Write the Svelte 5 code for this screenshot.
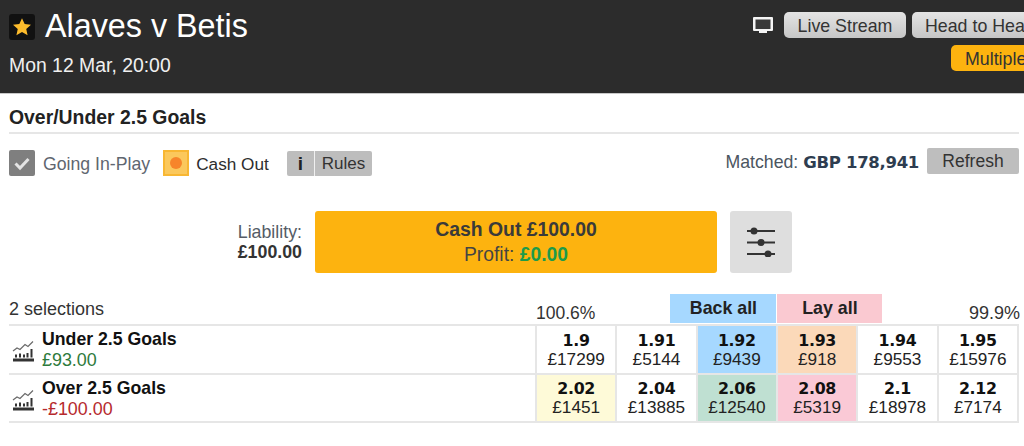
<script>
  const toolbar = { matched: "GBP 178,941" };

  const runners = [
    {
      name: "Under 2.5 Goals",
      pl: "£93.00",
      tone: "win",
      prices: [
        { odds: "1.9", size: "£17299" },
        { odds: "1.91", size: "£5144" },
        { odds: "1.92", size: "£9439", fill: "back" },
        { odds: "1.93", size: "£918", fill: "peach" },
        { odds: "1.94", size: "£9553" },
        { odds: "1.95", size: "£15976" }
      ]
    },
    {
      name: "Over 2.5 Goals",
      pl: "-£100.00",
      tone: "loss",
      prices: [
        { odds: "2.02", size: "£1451", fill: "cream" },
        { odds: "2.04", size: "£13885" },
        { odds: "2.06", size: "£12540", fill: "green" },
        { odds: "2.08", size: "£5319", fill: "lay" },
        { odds: "2.1", size: "£18978" },
        { odds: "2.12", size: "£7174" }
      ]
    }
  ];
</script>

<div class="page">
  <header class="top">
    <div class="event">
      <div class="title-row">
        <span class="star-box">
          <svg viewBox="0 0 24 24" width="20" height="20">
            <path fill="#fdbc2c" d="M12 1.500l3.200 7 7.600.8-5.700 5.100 1.600 7.500L12 18.100l-6.700 3.800 1.600-7.500L1.200 9.300l7.600-.8z" />
          </svg>
        </span>
        <h1>Alaves v Betis</h1>
      </div>
      <div class="date">Mon 12 Mar, 20:00</div>
    </div>
    <div class="actions">
      <div class="action-row">
        <svg class="tv" viewBox="0 0 20 17" width="20" height="17">
          <path fill="#f4f4f4" d="M1 0h18a1 1 0 0 1 1 1v12a1 1 0 0 1-1 1h-5v2H6v-2H1a1 1 0 0 1-1-1V1a1 1 0 0 1 1-1z" />
          <rect x="2.500" y="2.500" width="15" height="9.500" fill="#3a3a3a" />
        </svg>
        <button class="grey-btn live">Live Stream</button>
        <button class="grey-btn head">Head to Head</button>
      </div>
      <button class="multiples">Multiples</button>
    </div>
  </header>

  <section class="market">
    <h2>Over/Under 2.5 Goals</h2>

    <div class="toolbar">
      <span class="check">
        <svg viewBox="0 0 26 26" width="26" height="26">
          <path d="M6.500 13.500l4.500 4.500 8.500-9" fill="none" stroke="#e4e4e4" stroke-width="3" />
        </svg>
      </span>
      <span class="inplay">Going In-Play</span>
      <span class="cash-icon"><i></i></span>
      <span class="cash-label">Cash Out</span>
      <span class="rules"><b>i</b><span>Rules</span></span>
      <span class="matched">Matched: <strong>{toolbar.matched}</strong></span>
      <button class="refresh">Refresh</button>
    </div>

    <div class="cashout-row">
      <div class="liability">Liability:<strong>£100.00</strong></div>
      <button class="cashout">
        <strong>Cash Out £100.00</strong>
        <span>Profit: <em>£0.00</em></span>
      </button>
      <button class="settings" aria-label="Settings">
        <svg viewBox="0 0 30 30" width="30" height="30">
          <g stroke="#333" stroke-width="2" fill="#333">
            <line x1="1" y1="4" x2="29" y2="4" />
            <line x1="1" y1="15.500" x2="29" y2="15.500" />
            <line x1="1" y1="27" x2="29" y2="27" />
            <circle cx="8" cy="4" r="2.500" />
            <circle cx="15" cy="15.500" r="2.500" />
            <circle cx="22" cy="27" r="2.500" />
          </g>
        </svg>
      </button>
    </div>

    <div class="table-head">
      <span class="count">2 selections</span>
      <span class="pct back-pct">100.6%</span>
      <span class="all back-all">Back all</span>
      <span class="all lay-all">Lay all</span>
      <span class="pct lay-pct">99.9%</span>
    </div>

    <div class="runners">
      {#each runners as runner}
        <div class="runner">
          <svg class="chart" viewBox="0 0 22 22" width="22" height="22">
            <path d="M1 11l4-3 3 1.500 5-5 3 2 5-5" fill="none" stroke="#6a6a6a" stroke-width="1.200" />
            <path d="M1 18.500h21v3H1z" fill="#333" />
            <path d="M3 14.500h2v3H3zM7 13.500h2v4H7zM11 14.500h2v3h-2zM14.500 13h2v4.500h-2zM18.500 9h2v8.500h-2z" fill="#333" />
          </svg>
          <div class="runner-text">
            <div class="runner-name">{runner.name}</div>
            <div class="pl {runner.tone}">{runner.pl}</div>
          </div>
          <div class="prices">
            {#each runner.prices as price}
              <div class="price {price.fill ?? ''}">
                <strong>{price.odds}</strong>
                <span>{price.size}</span>
              </div>
            {/each}
          </div>
        </div>
      {/each}
    </div>
  </section>
</div>

<style>
  :global(body) {
    margin: 0;
    background: #fff;
    overflow: hidden;
  }

  .page {
    width: 1024px;
    height: 446px;
    overflow: hidden;
    font-family: "Liberation Sans", Arial, sans-serif;
    color: #222;
  }

  button {
    font-family: inherit;
    padding: 0;
    border: none;
  }

  .top {
    display: flex;
    height: 93px;
    background: #2c2c2c;
    border-bottom: 1px solid #c8c8c8;
    padding-left: 9px;
    color: #fff;
  }

  .event {
    width: 744px;
    flex: none;
  }

  .title-row {
    display: flex;
    align-items: center;
    gap: 10px;
    padding-top: 8px;
    height: 36px;
  }

  .star-box {
    display: flex;
    align-items: center;
    justify-content: center;
    width: 26px;
    height: 26px;
    margin-top: 1px;
    border-radius: 3px;
    background: #111;
  }

  h1 {
    margin: 0;
    font-size: 32.300px;
    font-weight: 400;
    line-height: 36px;
  }

  .date {
    margin-top: 9px;
    font-size: 19.400px;
    line-height: 24px;
    color: #f0f0f0;
  }

  .actions {
    flex: none;
    display: flex;
    flex-direction: column;
    padding-top: 12px;
  }

  .action-row {
    display: flex;
    align-items: center;
  }

  .tv {
    margin-right: 11px;
  }

  .grey-btn {
    height: 26px;
    padding-top: 2px;
    border-radius: 5px;
    background: linear-gradient(#e4e4e4, #c6c6c6);
    color: #333;
    font-size: 17.800px;
  }

  .live {
    width: 122px;
    margin-right: 6px;
  }

  .head {
    width: 122px;
    padding-left: 13px;
    text-align: left;
    white-space: nowrap;
  }

  .multiples {
    align-self: flex-start;
    width: 90px;
    height: 26px;
    margin: 7px 0 0 198px;
    padding: 2px 0 0 14px;
    border-radius: 5px;
    background: #fdb30f;
    color: #333;
    font-size: 17.800px;
    text-align: left;
  }

  .market {
    padding: 0 5px 0 9px;
  }

  h2 {
    margin: 0;
    height: 38px;
    line-height: 46px;
    font-size: 19.400px;
    font-weight: 700;
    border-bottom: 2px solid #e6e6e6;
    color: #222;
  }

  .toolbar {
    display: flex;
    align-items: center;
    height: 26px;
    margin-top: 16px;
    font-size: 17.700px;
  }

  .check {
    display: flex;
    width: 26px;
    height: 26px;
    background: #7f7f7f;
    border-radius: 2px;
  }

  .inplay {
    margin-left: 8px;
    padding-top: 3px;
    color: #5f6670;
  }

  .cash-icon {
    display: flex;
    align-items: center;
    justify-content: center;
    box-sizing: border-box;
    width: 26px;
    height: 26px;
    margin-left: 13px;
    border: 2px solid #f8b733;
    background: #fbc85c;
  }

  .cash-icon i {
    width: 12px;
    height: 12px;
    border-radius: 50%;
    background: #f7852a;
  }

  .cash-label {
    margin-left: 7px;
    padding-top: 3px;
    font-size: 17.200px;
    color: #2d2d2d;
  }

  .rules {
    display: flex;
    align-items: center;
    width: 85px;
    height: 25px;
    margin-left: 18px;
    border-radius: 2px;
    background: #bdbdbd;
    color: #333;
    font-size: 17px;
  }

  .rules b {
    width: 27px;
    text-align: center;
    font-size: 19px;
    color: #222;
    border-right: 1px solid #f0f0f0;
    line-height: 25px;
  }

  .rules span {
    margin-left: 7px;
    padding-top: 1px;
  }

  .matched {
    margin-left: auto;
    margin-bottom: 2px;
    font-size: 17.700px;
    color: #4b5560;
  }

  .matched strong {
    font-family: "DejaVu Sans", Verdana, sans-serif;
    font-size: 16.500px;
    letter-spacing: -0.3px;
    color: #2e3d50;
  }

  .refresh {
    width: 92px;
    height: 26px;
    margin-left: 8px;
    margin-bottom: 4px;
    border-radius: 2px;
    background: #bebebe;
    color: #333;
    font-size: 17.500px;
  }

  .cashout-row {
    display: flex;
    align-items: stretch;
    height: 62px;
    margin-top: 35px;
    padding-left: 222px;
  }

  .liability {
    display: flex;
    flex-direction: column;
    justify-content: center;
    align-items: flex-end;
    width: 71px;
    font-size: 17.800px;
    line-height: 20px;
    color: #555c66;
  }

  .liability strong {
    color: #333;
  }

  .cashout {
    display: flex;
    flex-direction: column;
    align-items: center;
    justify-content: center;
    width: 402px;
    margin-left: 13px;
    border-radius: 3px;
    background: #fdb30f;
    color: #3a3a3a;
    font-size: 19.400px;
    line-height: 26px;
  }

  .cashout span {
    font-size: 19.300px;
    color: #444;
  }

  .cashout em {
    font-style: normal;
    font-weight: 700;
    color: #1d9b4a;
  }

  .settings {
    display: flex;
    align-items: center;
    justify-content: center;
    width: 62px;
    margin-left: 13px;
    border-radius: 3px;
    background: #dedede;
  }

  .table-head {
    display: flex;
    height: 30px;
    margin-top: 21px;
    font-size: 18px;
  }

  .count {
    margin-top: 5px;
    color: #333;
  }

  .pct {
    color: #333;
    margin-top: 9px;
    font-size: 17.500px;
  }

  .back-pct {
    margin-left: 432px;
  }

  .all {
    display: flex;
    align-items: center;
    justify-content: center;
    height: 29px;
    font-size: 17.800px;
    font-weight: 700;
    color: #222;
  }

  .back-all {
    width: 106px;
    margin-left: 75px;
    background: #a6d8ff;
  }

  .lay-all {
    width: 105px;
    margin-left: 1px;
    background: #fac9d1;
  }

  .lay-pct {
    margin-left: auto;
    margin-right: -1px;
    font-size: 18px;
  }

  .runners {
    border-top: 2px solid #e6e6e6;
  }

  .runner {
    display: flex;
    align-items: stretch;
    height: 46.500px;
    border-bottom: 2px solid #e6e6e6;
  }

  .chart {
    align-self: center;
    margin: 4px 0 0 3px;
  }

  .runner-text {
    width: 493px;
    margin-left: 8px;
    padding-top: 3px;
  }

  .runner-name {
    font-size: 17.700px;
    font-weight: 700;
    color: #111;
    line-height: 20px;
  }

  .pl {
    font-size: 17.900px;
    line-height: 22px;
  }

  .win {
    color: #2e7a3c;
  }

  .loss {
    color: #b62a2e;
  }

  .prices {
    display: flex;
    flex: 1;
    border-left: 2px solid #e6e6e6;
  }

  .price {
    display: flex;
    flex: 1;
    flex-direction: column;
    align-items: center;
    justify-content: center;
    padding-top: 1px;
    font-size: 17.200px;
    line-height: 19px;
    color: #222;
    border-right: 2px solid #e6e6e6;
  }

  .price strong {
    font-family: "DejaVu Sans", Verdana, sans-serif;
    font-size: 15.800px;
    letter-spacing: -0.3px;
    color: #111;
  }

  .back {
    background: #a6d8ff;
  }

  .peach {
    background: #fbd9b9;
  }

  .cream {
    background: #fefad8;
  }

  .green {
    background: #bfe0d2;
  }

  .lay {
    background: #fac9d6;
  }
</style>
